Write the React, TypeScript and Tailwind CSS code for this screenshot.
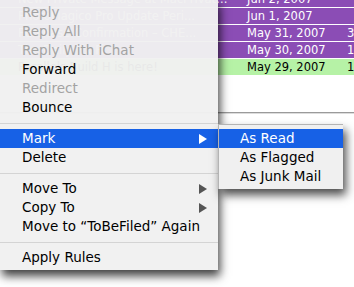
type Row = {
  subject: string;
  date: string;
  count: string;
  tone: "purple" | "green";
};

const rows: Row[] = [
  { subject: "New Private Message at MacPrivate Forums", date: "Jun 2, 2007", count: "", tone: "purple" },
  { subject: "PhotoMagico Pro Update Peri...", date: "Jun 1, 2007", count: "", tone: "purple" },
  { subject: "Purchase Confirmation – CHE...", date: "May 31, 2007", count: "3", tone: "purple" },
  { subject: "The Daily Fix Fi...", date: "May 30, 2007", count: "11", tone: "purple" },
  { subject: "Parallels Build H is here!", date: "May 29, 2007", count: "12", tone: "green" },
];

type Item =
  | { kind: "item"; label: string; disabled?: boolean; submenu?: boolean; active?: boolean }
  | { kind: "sep" };

const items: Item[] = [
  { kind: "item", label: "Reply", disabled: true },
  { kind: "item", label: "Reply All", disabled: true },
  { kind: "item", label: "Reply With iChat", disabled: true },
  { kind: "item", label: "Forward" },
  { kind: "item", label: "Redirect", disabled: true },
  { kind: "item", label: "Bounce" },
  { kind: "sep" },
  { kind: "item", label: "Mark", submenu: true, active: true },
  { kind: "item", label: "Delete" },
  { kind: "sep" },
  { kind: "item", label: "Move To", submenu: true },
  { kind: "item", label: "Copy To", submenu: true },
  { kind: "item", label: "Move to “ToBeFiled” Again" },
  { kind: "sep" },
  { kind: "item", label: "Apply Rules" },
];

function Arrow({ white }: { white?: boolean }) {
  return (
    <svg width="8" height="10" viewBox="0 0 8 10" className="shrink-0">
      <path d="M0 0 L8 5 L0 10 Z" fill={white ? "#ffffff" : "#555555"} />
    </svg>
  );
}

function MailRow({ row }: { row: Row }) {
  const green = row.tone === "green";
  return (
    <div
      className={`flex h-[17px] items-center border-b border-white text-[11.5px] leading-[16px] ${
        green ? "bg-[#b6f2a6] text-black" : "bg-[#8b4db5] text-white"
      }`}
    >
      <span className="w-[247px] shrink-0 truncate pl-[18px] pr-[18px]">{row.subject}</span>
      <span className="w-[100px] shrink-0">{row.date}</span>
      <span className="shrink-0">{row.count}</span>
    </div>
  );
}

export default function App() {
  return (
    <div className="relative h-[287px] w-[354px] overflow-hidden bg-white font-['DejaVu_Sans',sans-serif]">
      <div className="mt-[-9px] flex flex-col">
        {rows.map((row) => (
          <MailRow key={row.date} row={row} />
        ))}
      </div>
      <div className="mt-[36px] h-px bg-[#9a9a9a]" />
      <div className="h-px bg-[#dcdcdc]" />

      {/* context menu */}
      <div className="absolute left-0 top-[-1px] w-[218px] bg-[rgba(240,240,240,0.965)] pb-[3px] pt-[4px] text-[13.5px] shadow-[2px_6px_9px_rgba(0,0,0,0.75)]">
        {items.map((item, i) =>
          item.kind === "sep" ? (
            <div key={i} className="flex h-[12px] items-center">
              <div className="h-px w-full bg-[#d4d4d4]" />
            </div>
          ) : (
            <div
              key={i}
              className={`flex h-[19px] items-center justify-between pl-[22px] pr-[11px] leading-[19px] ${
                item.active
                  ? "bg-[#1761e6] text-white"
                  : item.disabled
                    ? "text-[#a3a3a3]"
                    : "text-black"
              }`}
            >
              <span className="whitespace-nowrap">{item.label}</span>
              {item.submenu && <Arrow white={item.active} />}
            </div>
          )
        )}
      </div>

      {/* submenu */}
      <div className="absolute left-[218px] top-[124px] w-[125px] border-l border-t border-[#b4b4b4] bg-[#f0f0f0] pb-[3px] pt-[4px] text-[13.5px] shadow-[3px_6px_9px_rgba(0,0,0,0.7)]">
        {["As Read", "As Flagged", "As Junk Mail"].map((label, i) => (
          <div
            key={label}
            className={`h-[19px] whitespace-nowrap pl-[21px] leading-[19px] ${
              i === 0 ? "bg-[#1761e6] text-white" : "text-black"
            }`}
          >
            {label}
          </div>
        ))}
      </div>
    </div>
  );
}
